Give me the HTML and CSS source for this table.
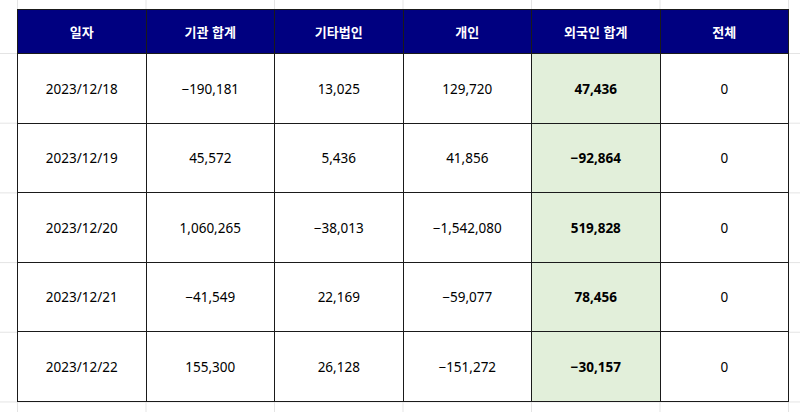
FILE: index.html
```html
<!DOCTYPE html>
<html lang="ko">
<head>
<meta charset="utf-8">
<title>투자자별 매매동향</title>
<link rel="stylesheet" href="styles.css">
</head>
<body>
<div class="sheet">
  <table class="trade">
    <thead>
      <tr>
        <th>일자</th>
        <th>기관 합계</th>
        <th>기타법인</th>
        <th>개인</th>
        <th>외국인 합계</th>
        <th>전체</th>
      </tr>
    </thead>
    <tbody>
      <tr class="r1">
        <td>2023/12/18</td><td>−190,181</td><td>13,025</td><td>129,720</td><td class="foreign">47,436</td><td>0</td>
      </tr>
      <tr class="r2">
        <td>2023/12/19</td><td>45,572</td><td>5,436</td><td>41,856</td><td class="foreign">−92,864</td><td>0</td>
      </tr>
      <tr class="r1">
        <td>2023/12/20</td><td>1,060,265</td><td>−38,013</td><td>−1,542,080</td><td class="foreign">519,828</td><td>0</td>
      </tr>
      <tr class="r2">
        <td>2023/12/21</td><td>−41,549</td><td>22,169</td><td>−59,077</td><td class="foreign">78,456</td><td>0</td>
      </tr>
      <tr class="r1">
        <td>2023/12/22</td><td>155,300</td><td>26,128</td><td>−151,272</td><td class="foreign">−30,157</td><td>0</td>
      </tr>
    </tbody>
  </table>
</div>
</body>
</html>
```
FILE: styles.css
```css
html, body {
  margin: 0;
  padding: 0;
}
body {
  width: 800px;
  height: 412px;
  overflow: hidden;
  background-color: #ffffff;
  background-image:
    linear-gradient(to right, #e4e4e4 0, #e4e4e4 1px, transparent 1px),
    linear-gradient(to bottom, #e4e4e4 0, #e4e4e4 1px, transparent 1px);
  background-size: 128.5px 100%, 100% 69.7px;
  background-position: 17px 0, 0 53px;
  font-family: "Noto Sans", "Noto Sans CJK KR", sans-serif;
  color: #000;
}
.sheet {
  padding: 9px 0 0 17px;
}
.trade {
  border-collapse: collapse;
  table-layout: fixed;
  width: 772px;
  background: #fff;
}
.trade th,
.trade td {
  border: 1px solid #1a1a1a;
  text-align: center;
  vertical-align: middle;
  padding: 0;
  font-size: 13.5px;
  line-height: 16px;
}
.trade th {
  background: #000080;
  color: #fff;
  font-weight: 700;
  font-size: 13px;
  height: 43px;
  font-family: "Noto Sans CJK KR", "Noto Sans", sans-serif;
}
.trade .r1 td {
  height: 69px;
}
.trade .r2 td {
  height: 68px;
}
.trade td.foreign {
  background: #e2efda;
  font-weight: 700;
}
```
